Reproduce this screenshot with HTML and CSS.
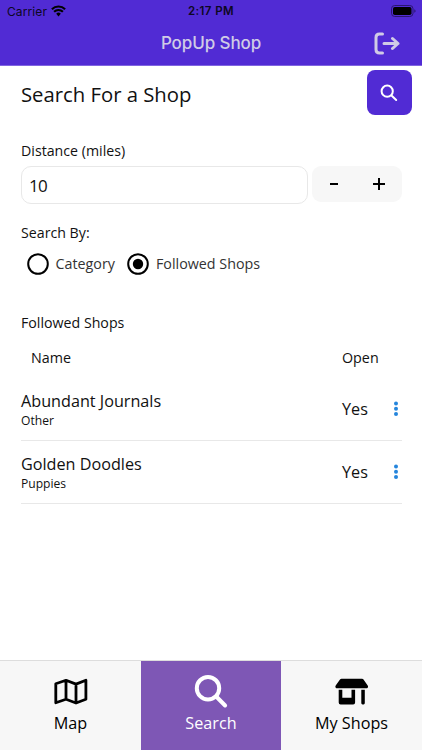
FILE: index.html
```html
<!DOCTYPE html>
<html lang="en">
<head>
<meta charset="utf-8">
<title>PopUp Shop</title>
<link rel="stylesheet" href="styles.css">
</head>
<body>
<div class="app">
  <header class="top">
    <div class="status">
      <div class="carrier"><span>Carrier</span>
        <svg width="15" height="12" viewBox="0 0 15 12"><path d="M7.500 11.400 5.200 8.800a3.200 3.200 0 0 1 4.600 0z"/><path d="M3.100 6.800a6.200 6.200 0 0 1 8.800 0M.9 4.200a9.300 9.300 0 0 1 13.200 0" fill="none" stroke="#000" stroke-width="2.100"/></svg>
      </div>
      <time class="clock">2:17 PM</time>
      <svg class="battery" width="25" height="12" viewBox="0 0 25 12"><rect x=".5" y=".5" width="21.500" height="11" rx="3.200" fill="none" stroke="#2a1670"/><rect x="2" y="2" width="18.500" height="8" rx="1.800"/><path d="M23.300 4.300q1.300.5 1.300 1.700t-1.300 1.700z" fill="#2a1670"/></svg>
    </div>
    <div class="titlebar">
      <h1>PopUp Shop</h1>
      <svg class="logout" width="26" height="23" viewBox="0 0 26 23" fill="none" stroke="#d0cbe6" stroke-width="3" stroke-linecap="round" stroke-linejoin="round"><path d="M8.500 2H5.500Q2 2 2 5.500v12Q2 21 5.500 21h3"/><path d="M10 11.500H24M18.500 6.500l5.500 5-5.500 5"/></svg>
    </div>
  </header>
  <main>
    <div class="heading"><h2>Search For a Shop</h2>
      <button class="go" aria-label="Search"><svg width="18" height="18" viewBox="0 0 18 18" fill="none" stroke="#fff" stroke-width="2" stroke-linecap="round"><circle cx="7.200" cy="7.200" r="5.600"/><path d="m11.500 11.500 4.700 4.500"/></svg></button>
    </div>
    <div class="label distance-label">Distance (miles)</div>
    <div class="distance"><div class="field">10</div>
      <div class="stepper">
        <button aria-label="Decrease"><svg width="8" height="2"><path d="M0 0h8v2H0z"/></svg></button>
        <button aria-label="Increase"><svg width="12" height="12"><path d="M0 5h5V0h2v5h5v2H7v5H5V7H0z"/></svg></button>
      </div>
    </div>
    <div class="label by-label">Search By:</div>
    <div class="radios">
      <div class="radio"><svg width="22" height="22"><circle cx="11" cy="11" r="9.800" fill="none" stroke="#000" stroke-width="2"/></svg><span>Category</span></div>
      <div class="radio"><svg width="22" height="22"><circle cx="11" cy="11" r="9.800" fill="none" stroke="#000" stroke-width="2"/><circle cx="11" cy="11" r="5.200"/></svg><span>Followed Shops</span></div>
    </div>
    <div class="label list-label">Followed Shops</div>
    <div class="columns"><span>Name</span><span>Open</span></div>
    <ul class="shops">
      <li><div class="shop"><div class="name">Abundant Journals</div><div class="kind">Other</div></div><span class="open">Yes</span><svg class="dots" width="6" height="16"><circle cx="3" cy="2.500" r="2"/><circle cx="3" cy="7.700" r="2"/><circle cx="3" cy="12.900" r="2"/></svg></li>
      <li><div class="shop"><div class="name">Golden Doodles</div><div class="kind">Puppies</div></div><span class="open">Yes</span><svg class="dots" width="6" height="16"><circle cx="3" cy="2.500" r="2"/><circle cx="3" cy="7.700" r="2"/><circle cx="3" cy="12.900" r="2"/></svg></li>
    </ul>
  </main>
  <nav>
    <div class="tab"><svg width="36" height="36" viewBox="0 0 36 36" fill="none" stroke="#000" stroke-width="2.800" stroke-linejoin="round"><path d="M2.800 9.800 13 6.300l10 3.800 9.900-3.800V25.300l-9.900 3.700-10-3.700L2.800 28.800zM13 6.300v19M23 10.100v18.900"/></svg><span>Map</span></div>
    <div class="tab active"><svg width="36" height="36" viewBox="0 0 36 36" fill="none" stroke="#fff" stroke-width="4" stroke-linecap="round"><circle cx="15" cy="14.200" r="11.200"/><path d="m23.200 22.500 8.900 9"/></svg><span>Search</span></div>
    <div class="tab"><svg width="36" height="36" viewBox="0 0 36 36"><path d="M7.500 4.700h20.500q1 0 1.500.8l4.200 6q.8 1.300 0 2.200-.5.600-1.500.6h-29q-1 0-1.500-.6-.8-.9 0-2.200l4.300-6Q6.500 4.700 7.500 4.700z"/><path d="M4.700 15.800h3.600v8h9.200v-8h3.600v12.700q0 1.900-1.900 1.900H6.600q-1.900 0-1.900-1.900zM27.300 15.800h3.500v13.300q0 1.300-1.200 1.300h-1.100q-1.200 0-1.200-1.300z"/></svg><span>My Shops</span></div>
  </nav>
</div>
</body>
</html>
```
FILE: styles.css
```css
* { box-sizing: border-box; }
body { margin: 0; background: #fff; color: #111; font-family: "Open Sans", sans-serif; }
h1, h2, ul { margin: 0; padding: 0; font-weight: 400; }
svg { display: block; flex: none; }
button { border: 0; padding: 0; background: none; display: flex; align-items: center; justify-content: center; }
.app { width: 422px; height: 750px; display: flex; flex-direction: column; overflow: hidden; }
.top { height: 66px; background: #512bd4; border-bottom: 1px solid #8065e0; font-family: Inter, sans-serif; flex: none; }
.status { height: 22px; display: grid; grid-template-columns: 1fr auto 1fr; align-items: center; padding: 0 6px 0 7px; font-size: 12px; color: #0d0723; }
.carrier { display: flex; align-items: center; gap: 4px; letter-spacing: .1px; }
.clock { font-weight: 600; font-size: 11.500px; letter-spacing: .4px; margin-right: 1px; }
.battery { justify-self: end; }
.titlebar { height: 42px; display: grid; grid-template-columns: 1fr auto 1fr; align-items: center; padding: 0 22px; }
.titlebar h1 { grid-column: 2; font-size: 17px; font-weight: 500; color: #d0cbe6; letter-spacing: -.1px; }
.logout { justify-self: end; }
main { flex: 1; padding: 0 20px 0 21px; }
.heading { height: 55px; display: flex; align-items: center; justify-content: space-between; margin-right: -9.500px; }
h2 { font-size: 20.300px; }
.go { width: 45px; height: 45px; border-radius: 8px; background: #512bd4; margin-top: -2px; }
.label { font-size: 14.200px; line-height: 20px; }
.distance-label { margin-top: 20px; }
.distance { display: flex; gap: 4px; margin-top: 5px; }
.field { flex: 1; height: 38px; border: 1px solid #e8e8e8; border-radius: 10px; padding-left: 7px; font-size: 17px; line-height: 37px; letter-spacing: -.7px; }
.stepper { width: 90px; height: 36px; border-radius: 9px; background: #f7f7f7; display: grid; grid-template-columns: 1fr 1fr; padding: 0 1px 1px 0; }
.by-label { margin-top: 19px; }
.radios { display: flex; gap: 12px; margin: 10px 0 0 5.500px; }
.radio { display: flex; align-items: center; gap: 7px; font-size: 14.300px; line-height: 22px; color: #333; }
.list-label { margin-top: 38px; }
.columns { display: grid; grid-template-columns: 311px 1fr; padding-left: 10px; margin-top: 15px; font-size: 14.300px; line-height: 20px; }
.shops { list-style: none; margin-top: 10px; }
.shops li { height: 63px; border-bottom: 1px solid #e8e8e8; display: grid; grid-template-columns: 321px 51px 1fr; align-items: center; }
.name { font-size: 16.200px; line-height: 22px; }
.kind { font-size: 12.100px; line-height: 17px; }
.open { font-size: 16.200px; }
.dots { fill: #2585dc; }
nav { height: 90px; flex: none; border-top: 1px solid #ddd; display: grid; grid-template-columns: 141px 140px 141px; background: #f7f7f7; }
.tab { display: flex; flex-direction: column; align-items: center; padding-top: 13px; font-size: 16.200px; line-height: 22px; color: #000; }
.tab span { margin-top: 2px; }
.active { background: #7e57b5; color: #fff; }
```
